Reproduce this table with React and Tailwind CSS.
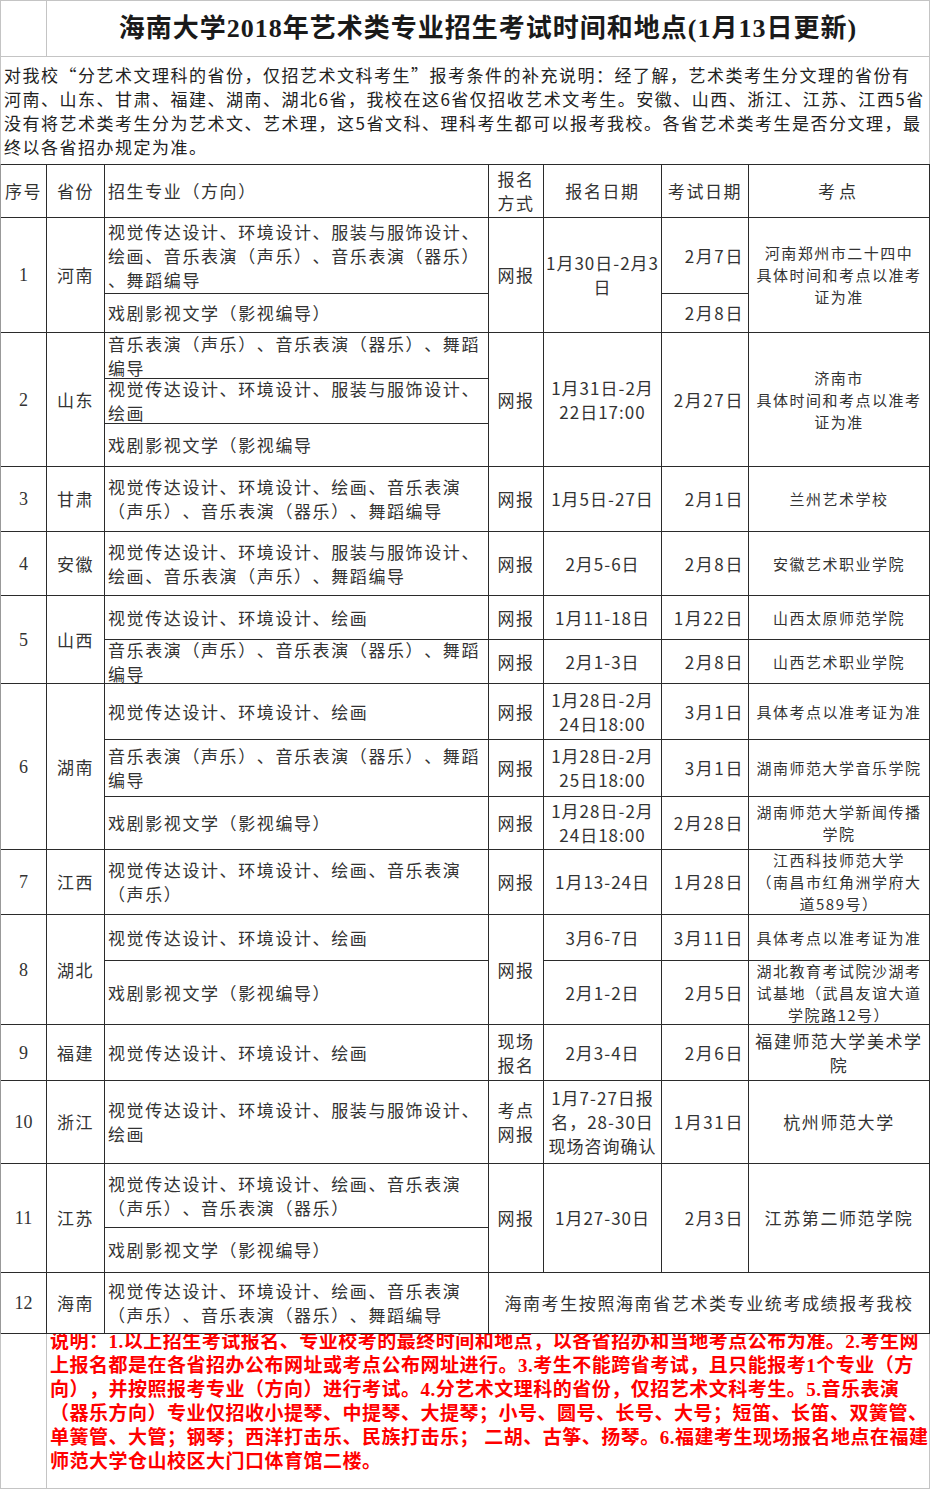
const notice = [
  '对我校“分艺术文理科的省份，仅招艺术文科考生”报考条件的补充说明：经了解，艺术类考生分文理的省份有',
  '河南、山东、甘肃、福建、湖南、湖北6省，我校在这6省仅招收艺术文考生。安徽、山西、浙江、江苏、江西5省',
  '没有将艺术类考生分为艺术文、艺术理，这5省文科、理科考生都可以报考我校。各省艺术类考生是否分文理，最',
  '终以各省招办规定为准。',
]

const remarks = [
  '说明：1.以上招生考试报名、专业校考的最终时间和地点，以各省招办和当地考点公布为准。2.考生网',
  '上报名都是在各省招办公布网址或考点公布网址进行。3.考生不能跨省考试，且只能报考1个专业（方',
  '向），并按照报考专业（方向）进行考试。4.分艺术文理科的省份，仅招艺术文科考生。5.音乐表演',
  '（器乐方向）专业仅招收小提琴、中提琴、大提琴；小号、圆号、长号、大号；短笛、长笛、双簧管、',
  '单簧管、大管；钢琴；西洋打击乐、民族打击乐； 二胡、古筝、扬琴。6.福建考生现场报名地点在福建',
  '师范大学仓山校区大门口体育馆二楼。',
]

const NUM = "font-['Liberation_Serif',serif] text-[18px] tracking-normal"
const SMALL = 'text-[15px] leading-[22px] tracking-[1.5px]'
const DATE = 'tracking-[1px]'

const cells = [
  // header
  { p: 'col-start-1 row-start-1', t: '序号' },
  { p: 'col-start-2 row-start-1', t: '省份' },
  { p: 'col-start-3 row-start-1', a: 'left', t: '招生专业（方向）' },
  { p: 'col-start-4 row-start-1', t: ['报名', '方式'] },
  { p: 'col-start-5 row-start-1', t: '报名日期' },
  { p: 'col-start-6 row-start-1', t: '考试日期' },
  { p: 'col-start-7 row-start-1 tracking-[4px]', t: '考点' },

  // 1 河南
  { p: 'col-start-1 row-start-2 row-span-2', k: NUM, t: '1' },
  { p: 'col-start-2 row-start-2 row-span-2', t: '河南' },
  { p: 'col-start-3 row-start-2', a: 'left', t: ['视觉传达设计、环境设计、服装与服饰设计、', '绘画、音乐表演（声乐）、音乐表演（器乐）', '、舞蹈编导'] },
  { p: 'col-start-3 row-start-3', a: 'left', t: '戏剧影视文学（影视编导）' },
  { p: 'col-start-4 row-start-2 row-span-2', t: '网报' },
  { p: 'col-start-5 row-start-2 row-span-2', k: DATE, t: ['1月30日-2月3', '日'] },
  { p: 'col-start-6 row-start-2', a: 'right', t: '2月7日' },
  { p: 'col-start-6 row-start-3', a: 'right', t: '2月8日' },
  { p: 'col-start-7 row-start-2 row-span-2', k: SMALL, t: ['河南郑州市二十四中', '具体时间和考点以准考', '证为准'] },

  // 2 山东
  { p: 'col-start-1 row-start-4 row-span-3', k: NUM, t: '2' },
  { p: 'col-start-2 row-start-4 row-span-3', t: '山东' },
  { p: 'col-start-3 row-start-4', a: 'left', t: ['音乐表演（声乐）、音乐表演（器乐）、舞蹈', '编导'] },
  { p: 'col-start-3 row-start-5', a: 'left', t: ['视觉传达设计、环境设计、服装与服饰设计、', '绘画'] },
  { p: 'col-start-3 row-start-6', a: 'left', t: '戏剧影视文学（影视编导' },
  { p: 'col-start-4 row-start-4 row-span-3', t: '网报' },
  { p: 'col-start-5 row-start-4 row-span-3', k: DATE, t: ['1月31日-2月', '22日17:00'] },
  { p: 'col-start-6 row-start-4 row-span-3', a: 'right', t: '2月27日' },
  { p: 'col-start-7 row-start-4 row-span-3', k: SMALL, t: ['济南市', '具体时间和考点以准考', '证为准'] },

  // 3 甘肃
  { p: 'col-start-1 row-start-7', k: NUM, t: '3' },
  { p: 'col-start-2 row-start-7', t: '甘肃' },
  { p: 'col-start-3 row-start-7', a: 'left', t: ['视觉传达设计、环境设计、绘画、音乐表演', '（声乐）、音乐表演（器乐）、舞蹈编导'] },
  { p: 'col-start-4 row-start-7', t: '网报' },
  { p: 'col-start-5 row-start-7', k: DATE, t: '1月5日-27日' },
  { p: 'col-start-6 row-start-7', a: 'right', t: '2月1日' },
  { p: 'col-start-7 row-start-7', k: SMALL, t: '兰州艺术学校' },

  // 4 安徽
  { p: 'col-start-1 row-start-8', k: NUM, t: '4' },
  { p: 'col-start-2 row-start-8', t: '安徽' },
  { p: 'col-start-3 row-start-8', a: 'left', t: ['视觉传达设计、环境设计、服装与服饰设计、', '绘画、音乐表演（声乐）、舞蹈编导'] },
  { p: 'col-start-4 row-start-8', t: '网报' },
  { p: 'col-start-5 row-start-8', k: DATE, t: '2月5-6日' },
  { p: 'col-start-6 row-start-8', a: 'right', t: '2月8日' },
  { p: 'col-start-7 row-start-8', k: SMALL, t: '安徽艺术职业学院' },

  // 5 山西
  { p: 'col-start-1 row-start-9 row-span-2', k: NUM, t: '5' },
  { p: 'col-start-2 row-start-9 row-span-2', t: '山西' },
  { p: 'col-start-3 row-start-9', a: 'left', t: '视觉传达设计、环境设计、绘画' },
  { p: 'col-start-4 row-start-9', t: '网报' },
  { p: 'col-start-5 row-start-9', k: DATE, t: '1月11-18日' },
  { p: 'col-start-6 row-start-9', a: 'right', t: '1月22日' },
  { p: 'col-start-7 row-start-9', k: SMALL, t: '山西太原师范学院' },
  { p: 'col-start-3 row-start-10', a: 'left', t: ['音乐表演（声乐）、音乐表演（器乐）、舞蹈', '编导'] },
  { p: 'col-start-4 row-start-10', t: '网报' },
  { p: 'col-start-5 row-start-10', k: DATE, t: '2月1-3日' },
  { p: 'col-start-6 row-start-10', a: 'right', t: '2月8日' },
  { p: 'col-start-7 row-start-10', k: SMALL, t: '山西艺术职业学院' },

  // 6 湖南
  { p: 'col-start-1 row-start-11 row-span-3', k: NUM, t: '6' },
  { p: 'col-start-2 row-start-11 row-span-3', t: '湖南' },
  { p: 'col-start-3 row-start-11', a: 'left', t: '视觉传达设计、环境设计、绘画' },
  { p: 'col-start-4 row-start-11', t: '网报' },
  { p: 'col-start-5 row-start-11', k: DATE, t: ['1月28日-2月', '24日18:00'] },
  { p: 'col-start-6 row-start-11', a: 'right', t: '3月1日' },
  { p: 'col-start-7 row-start-11', k: SMALL, t: '具体考点以准考证为准' },
  { p: 'col-start-3 row-start-12', a: 'left', t: ['音乐表演（声乐）、音乐表演（器乐）、舞蹈', '编导'] },
  { p: 'col-start-4 row-start-12', t: '网报' },
  { p: 'col-start-5 row-start-12', k: DATE, t: ['1月28日-2月', '25日18:00'] },
  { p: 'col-start-6 row-start-12', a: 'right', t: '3月1日' },
  { p: 'col-start-7 row-start-12', k: SMALL, t: '湖南师范大学音乐学院' },
  { p: 'col-start-3 row-start-13', a: 'left', t: '戏剧影视文学（影视编导）' },
  { p: 'col-start-4 row-start-13', t: '网报' },
  { p: 'col-start-5 row-start-13', k: DATE, t: ['1月28日-2月', '24日18:00'] },
  { p: 'col-start-6 row-start-13', a: 'right', t: '2月28日' },
  { p: 'col-start-7 row-start-13', k: SMALL, t: ['湖南师范大学新闻传播', '学院'] },

  // 7 江西
  { p: 'col-start-1 row-start-14', k: NUM, t: '7' },
  { p: 'col-start-2 row-start-14', t: '江西' },
  { p: 'col-start-3 row-start-14', a: 'left', t: ['视觉传达设计、环境设计、绘画、音乐表演', '（声乐）'] },
  { p: 'col-start-4 row-start-14', t: '网报' },
  { p: 'col-start-5 row-start-14', k: DATE, t: '1月13-24日' },
  { p: 'col-start-6 row-start-14', a: 'right', t: '1月28日' },
  { p: 'col-start-7 row-start-14', k: SMALL, t: ['江西科技师范大学', '（南昌市红角洲学府大', '道589号）'] },

  // 8 湖北
  { p: 'col-start-1 row-start-15 row-span-2', k: NUM, t: '8' },
  { p: 'col-start-2 row-start-15 row-span-2', t: '湖北' },
  { p: 'col-start-3 row-start-15', a: 'left', t: '视觉传达设计、环境设计、绘画' },
  { p: 'col-start-3 row-start-16', a: 'left', t: '戏剧影视文学（影视编导）' },
  { p: 'col-start-4 row-start-15 row-span-2', t: '网报' },
  { p: 'col-start-5 row-start-15', k: DATE, t: '3月6-7日' },
  { p: 'col-start-6 row-start-15', a: 'right', t: '3月11日' },
  { p: 'col-start-7 row-start-15', k: SMALL, t: '具体考点以准考证为准' },
  { p: 'col-start-5 row-start-16', k: DATE, t: '2月1-2日' },
  { p: 'col-start-6 row-start-16', a: 'right', t: '2月5日' },
  { p: 'col-start-7 row-start-16', k: SMALL, t: ['湖北教育考试院沙湖考', '试基地（武昌友谊大道', '学院路12号）'] },

  // 9 福建
  { p: 'col-start-1 row-start-17', k: NUM, t: '9' },
  { p: 'col-start-2 row-start-17', t: '福建' },
  { p: 'col-start-3 row-start-17', a: 'left', t: '视觉传达设计、环境设计、绘画' },
  { p: 'col-start-4 row-start-17', t: ['现场', '报名'] },
  { p: 'col-start-5 row-start-17', k: DATE, t: '2月3-4日' },
  { p: 'col-start-6 row-start-17', a: 'right', t: '2月6日' },
  { p: 'col-start-7 row-start-17', t: ['福建师范大学美术学', '院'] },

  // 10 浙江
  { p: 'col-start-1 row-start-18', k: NUM, t: '10' },
  { p: 'col-start-2 row-start-18', t: '浙江' },
  { p: 'col-start-3 row-start-18', a: 'left', t: ['视觉传达设计、环境设计、服装与服饰设计、', '绘画'] },
  { p: 'col-start-4 row-start-18', t: ['考点', '网报'] },
  { p: 'col-start-5 row-start-18', k: DATE, t: ['1月7-27日报', '名，28-30日', '现场咨询确认'] },
  { p: 'col-start-6 row-start-18', a: 'right', t: '1月31日' },
  { p: 'col-start-7 row-start-18', t: '杭州师范大学' },

  // 11 江苏
  { p: 'col-start-1 row-start-19 row-span-2', k: NUM, t: '11' },
  { p: 'col-start-2 row-start-19 row-span-2', t: '江苏' },
  { p: 'col-start-3 row-start-19', a: 'left', t: ['视觉传达设计、环境设计、绘画、音乐表演', '（声乐）、音乐表演（器乐）'] },
  { p: 'col-start-3 row-start-20', a: 'left', t: '戏剧影视文学（影视编导）' },
  { p: 'col-start-4 row-start-19 row-span-2', t: '网报' },
  { p: 'col-start-5 row-start-19 row-span-2', k: DATE, t: '1月27-30日' },
  { p: 'col-start-6 row-start-19 row-span-2', a: 'right', t: '2月3日' },
  { p: 'col-start-7 row-start-19 row-span-2', t: '江苏第二师范学院' },

  // 12 海南
  { p: 'col-start-1 row-start-21', k: NUM, t: '12' },
  { p: 'col-start-2 row-start-21', t: '海南' },
  { p: 'col-start-3 row-start-21', a: 'left', t: ['视觉传达设计、环境设计、绘画、音乐表演', '（声乐）、音乐表演（器乐）、舞蹈编导'] },
  { p: 'col-start-4 col-span-4 row-start-21', t: '海南考生按照海南省艺术类专业统考成绩报考我校' },
]

function Cell({ place, align = 'center', extra = '', lines }) {
  const list = Array.isArray(lines) ? lines : [lines]
  const alignment =
    align === 'left'
      ? 'justify-start text-left pl-[3px]'
      : align === 'right'
        ? 'justify-end text-right pr-[4px]'
        : 'justify-center text-center'

  return (
    <div className={`flex items-center bg-white ${alignment} ${place} ${extra}`}>
      <div>
        {list.map((line, i) => (
          <div key={i} className="whitespace-nowrap">
            {line}
          </div>
        ))}
      </div>
    </div>
  )
}

export default function App() {
  return (
    <div className="h-[1489px] w-[930px] overflow-hidden bg-white font-['Noto_Sans_CJK_SC',sans-serif] text-[#333] [text-spacing-trim:space-all]">
      <div className="flex h-[57px] border border-[#c4c4c4]">
        <div className="w-[46px] border-r border-[#c4c4c4]" />
        <div className="flex flex-1 items-center justify-center font-['Liberation_Serif','Noto_Sans_CJK_SC',serif] text-[26px] font-bold tracking-[1px] text-[#1a1a1a]">
          海南大学2018年艺术类专业招生考试时间和地点(1月13日更新)
        </div>
      </div>

      <div className="h-[107px] border-x border-[#c4c4c4] pl-[3px] pt-[6px] text-[17px] leading-[24px] tracking-[1.5px] text-[#222]">
        {notice.map((line) => (
          <div key={line} className="whitespace-nowrap">
            {line}
          </div>
        ))}
      </div>

      <div className="relative z-10 grid grid-cols-[45px_57px_383px_54px_117px_86px_180px] grid-rows-[52px_75px_38px_45px_44px_42px_64px_63px_43px_43px_55px_56px_52px_64px_45px_63px_55px_82px_63px_44px_60px] gap-px border-l border-[#999] bg-[#2b2b2b] py-px pr-px text-[17px] leading-[24px] tracking-[1.6px]">
        {cells.map((cell, i) => (
          <Cell key={i} place={cell.p} align={cell.a} extra={cell.k} lines={cell.t} />
        ))}
      </div>

      <div className="flex h-[155px] border-x border-b border-[#c4c4c4]">
        <div className="w-[46px] shrink-0 border-r border-[#c4c4c4]" />
        <div className="-mt-[4px] pl-[3px] font-['Liberation_Serif','Noto_Sans_CJK_SC',serif] text-[19px] font-bold leading-[24px] tracking-[0.5px] text-[#ff0000]">
          {remarks.map((line) => (
            <div key={line} className="whitespace-pre">
              {line}
            </div>
          ))}
        </div>
      </div>
    </div>
  )
}
